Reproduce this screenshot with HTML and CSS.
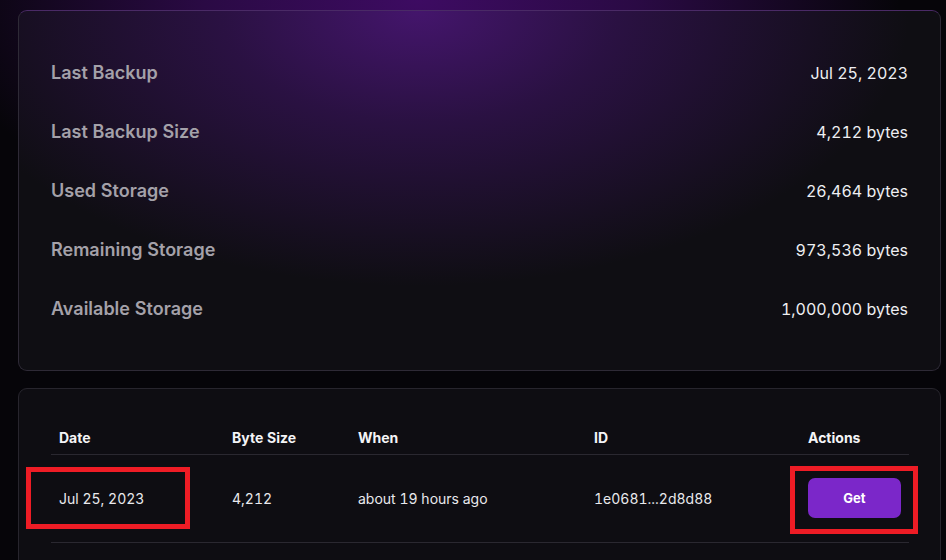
FILE: index.html
```html
<!DOCTYPE html>
<html lang="en">
<head>
<meta charset="utf-8">
<title>Backups</title>
<link rel="stylesheet" href="styles.css">
</head>
<body>
<div class="glow"></div>
<main class="page">
  <section class="card stats">
    <div class="row"><span class="label">Last Backup</span><span class="value">Jul 25, 2023</span></div>
    <div class="row"><span class="label">Last Backup Size</span><span class="value">4,212 bytes</span></div>
    <div class="row"><span class="label">Used Storage</span><span class="value">26,464 bytes</span></div>
    <div class="row"><span class="label">Remaining Storage</span><span class="value">973,536 bytes</span></div>
    <div class="row"><span class="label">Available Storage</span><span class="value">1,000,000 bytes</span></div>
  </section>
  <section class="card list">
    <table class="backups">
      <colgroup>
        <col class="c-date"><col class="c-size"><col class="c-when"><col class="c-id"><col class="c-act">
      </colgroup>
      <thead>
        <tr><th>Date</th><th>Byte Size</th><th>When</th><th>ID</th><th>Actions</th></tr>
      </thead>
      <tbody>
        <tr>
          <td>Jul 25, 2023</td>
          <td>4,212</td>
          <td>about 19 hours ago</td>
          <td>1e0681...2d8d88</td>
          <td><button class="get">Get</button></td>
        </tr>
      </tbody>
    </table>
    <div class="mark mark-date"></div>
    <div class="mark mark-btn"></div>
  </section>
</main>
</body>
</html>
```
FILE: styles.css
```css
* { box-sizing: border-box; }
html, body { margin: 0; height: 100%; }
body {
  background: #060509;
  font-family: Inter, "Noto Sans", sans-serif;
  font-variant-numeric: tabular-nums;
  color: #ebebef;
  overflow: hidden;
  position: relative;
}
.glow {
  position: absolute;
  left: 0; top: 0; right: 0; height: 560px;
  background: radial-gradient(ellipse 480px 260px at 420px 0px, #3d0b62 0%, #2a0a44 45%, rgba(6, 5, 9, 0) 100%);
  pointer-events: none;
}
.page {
  position: relative;
  padding: 10px 5px 0 18px;
  display: flex;
  flex-direction: column;
  gap: 17px;
}
.card {
  border: 1px solid #27252d;
  border-radius: 9px;
  background: #0e0d12;
}
.stats {
  border-color: #2e2a36;
  border-top-color: #4a2a66;
  background:
    radial-gradient(ellipse 490px 275px at 400px 0px, rgba(68, 21, 108, 1) 0%, rgba(50, 18, 80, 0.78) 40%, rgba(14, 13, 18, 0) 100%),
    #0f0e13;
  padding: 32px 32px 32px 32px;
  display: flex;
  flex-direction: column;
}
.row {
  height: 59px;
  display: flex;
  align-items: center;
  justify-content: space-between;
}
.label {
  font-size: 18px;
  font-weight: 600;
  color: #a4a1a9;
}
.value {
  font-size: 16px;
  color: #eeeef2;
}
.list {
  position: relative;
  padding: 33px 31px 40px 32px;
}
.backups {
  width: 100%;
  table-layout: fixed;
  border-collapse: collapse;
}
.c-date { width: 173px; }
.c-size { width: 126px; }
.c-when { width: 236px; }
.c-id { width: 214px; }
.c-act { width: 109px; }
.backups th {
  text-align: left;
  font-size: 14px;
  font-weight: 700;
  color: #f4f4f6;
  height: 32px;
  padding: 0 8px;
  border-bottom: 1px solid #2a2830;
  vertical-align: middle;
}
.backups td {
  font-size: 14px;
  color: #e9e9ed;
  padding: 0 8px;
  height: 88px;
  border-bottom: 1px solid #2a2830;
  vertical-align: middle;
}
.get {
  width: 93px;
  height: 40px;
  border: 0;
  border-radius: 7px;
  background: #7b27c9;
  color: #fff;
  font-family: Inter, "Noto Sans", sans-serif;
  font-size: 13px;
  font-weight: 700;
  display: block;
}
.mark {
  position: absolute;
  border: 5px solid #ee1c25;
}
.mark-date { left: 7px; top: 78px; width: 164px; height: 62px; }
.mark-btn { left: 771px; top: 77px; width: 128px; height: 68px; }
```
